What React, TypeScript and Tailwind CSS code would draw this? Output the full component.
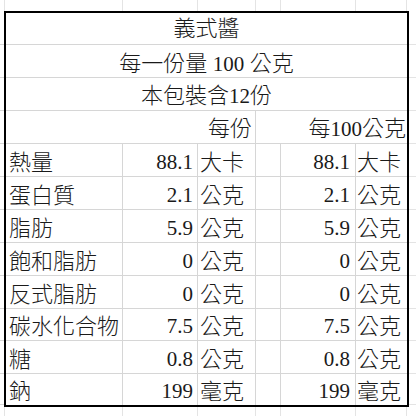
// Nutrition facts sheet, drawn like a spreadsheet range with a black outer border.

const COLS = [117, 75, 58, 25, 75, 51];
const ROW_H = [32, 33, 33, 33, 33, 33, 33, 33, 33, 32, 33, 31];

type Nutrient = { name: string; value: string; unit: string };

const NUTRIENTS: Nutrient[] = [
  { name: "熱量", value: "88.1", unit: "大卡" },
  { name: "蛋白質", value: "2.1", unit: "公克" },
  { name: "脂肪", value: "5.9", unit: "公克" },
  { name: "飽和脂肪", value: "0", unit: "公克" },
  { name: "反式脂肪", value: "0", unit: "公克" },
  { name: "碳水化合物", value: "7.5", unit: "公克" },
  { name: "糖", value: "0.8", unit: "公克" },
  { name: "鈉", value: "199", unit: "毫克" },
];

const FONT = { fontFamily: '"Liberation Serif", "Noto Sans CJK TC", serif' };

function Num({ children }: { children: string }) {
  return <span className="text-[21px]">{children}</span>;
}

export default function App() {
  return (
    <div
      className="w-[416px] h-[416px] bg-white text-[#1a1a1a] overflow-hidden flex flex-col"
      style={FONT}
    >
      {/* top strip: faint column ticks */}
      <div className="flex h-[11px] shrink-0">
        <div className="w-[5px] border-r border-[#e4e4e4]" />
        {COLS.map((w, i) => (
          <div key={i} className="border-r border-[#e4e4e4]" style={{ width: w + (i === 0 ? 1 : 0) }} />
        ))}
      </div>

      <div className="flex">
        {/* left strip: faint row ticks */}
        <div className="w-[4px] shrink-0 flex flex-col pt-[2px]">
          {ROW_H.map((h, i) => (
            <div key={i} className="border-b border-[#d6d6d6]" style={{ height: h }} />
          ))}
        </div>

        <div
          className="w-[405px] h-[396px] shrink-0 border-2 border-black grid font-extralight leading-none"
          style={{
            gridTemplateColumns: COLS.map((c) => `${c}px`).join(" "),
            gridTemplateRows: ROW_H.map((r) => `${r}px`).join(" "),
          }}
        >
          <div className="col-span-6 border-b border-[#d6d6d6] flex items-end justify-center pb-[4px] text-[22px]">
            義式醬
          </div>
          <div className="col-span-6 border-b border-[#d6d6d6] flex items-end justify-center pb-[2px] text-[22px]">
            <span>
              每一份量 <Num>100</Num> 公克
            </span>
          </div>
          <div className="col-span-6 border-b border-[#d6d6d6] flex items-end justify-center pb-[3px] text-[22px]">
            <span>
              本包裝含<Num>12</Num>份
            </span>
          </div>
          <div className="col-span-3 border-b border-r border-[#d6d6d6] flex items-end justify-end pr-[3px] pb-[3px] text-[22px]">
            每份
          </div>
          <div className="col-span-3 border-b border-[#d6d6d6] flex items-end justify-end pr-[1px] pb-[3px] text-[22px]">
            <span>
              每<Num>100</Num>公克
            </span>
          </div>

          {NUTRIENTS.map((n, i) => {
            const last = i === NUTRIENTS.length - 1;
            const line = last ? "" : "border-b";
            return (
              <div key={n.name} className="contents">
                <div className={`${line} border-r border-[#d6d6d6] flex items-end pl-[3px] pb-[2px] text-[22px] whitespace-nowrap`}>
                  {n.name}
                </div>
                <div className={`${line} border-r border-[#d6d6d6] flex items-end justify-end pr-[4px] pb-[3px]`}>
                  <Num>{n.value}</Num>
                </div>
                <div className={`${line} border-r border-[#d6d6d6] flex items-end pl-[2px] pb-[2px] text-[22px]`}>
                  {n.unit}
                </div>
                <div className={`${line} border-r border-[#d6d6d6]`} />
                <div className={`${line} border-r border-[#d6d6d6] flex items-end justify-end pr-[5px] pb-[3px]`}>
                  <Num>{n.value}</Num>
                </div>
                <div className={`${line} border-[#d6d6d6] flex items-end pl-[1px] pb-[2px] text-[22px]`}>
                  {n.unit}
                </div>
              </div>
            );
          })}
        </div>

        {/* right strip: faint row ticks */}
        <div className="flex-1 flex flex-col pt-[2px]">
          {ROW_H.map((h, i) => (
            <div key={i} className="border-b border-[#e4e4e4]" style={{ height: h }} />
          ))}
        </div>
      </div>

      {/* bottom strip: faint column ticks */}
      <div className="flex flex-1">
        <div className="w-[5px] border-r border-[#e4e4e4]" />
        {COLS.map((w, i) => (
          <div key={i} className="border-r border-[#e4e4e4]" style={{ width: w + (i === 0 ? 1 : 0) }} />
        ))}
      </div>
    </div>
  );
}
